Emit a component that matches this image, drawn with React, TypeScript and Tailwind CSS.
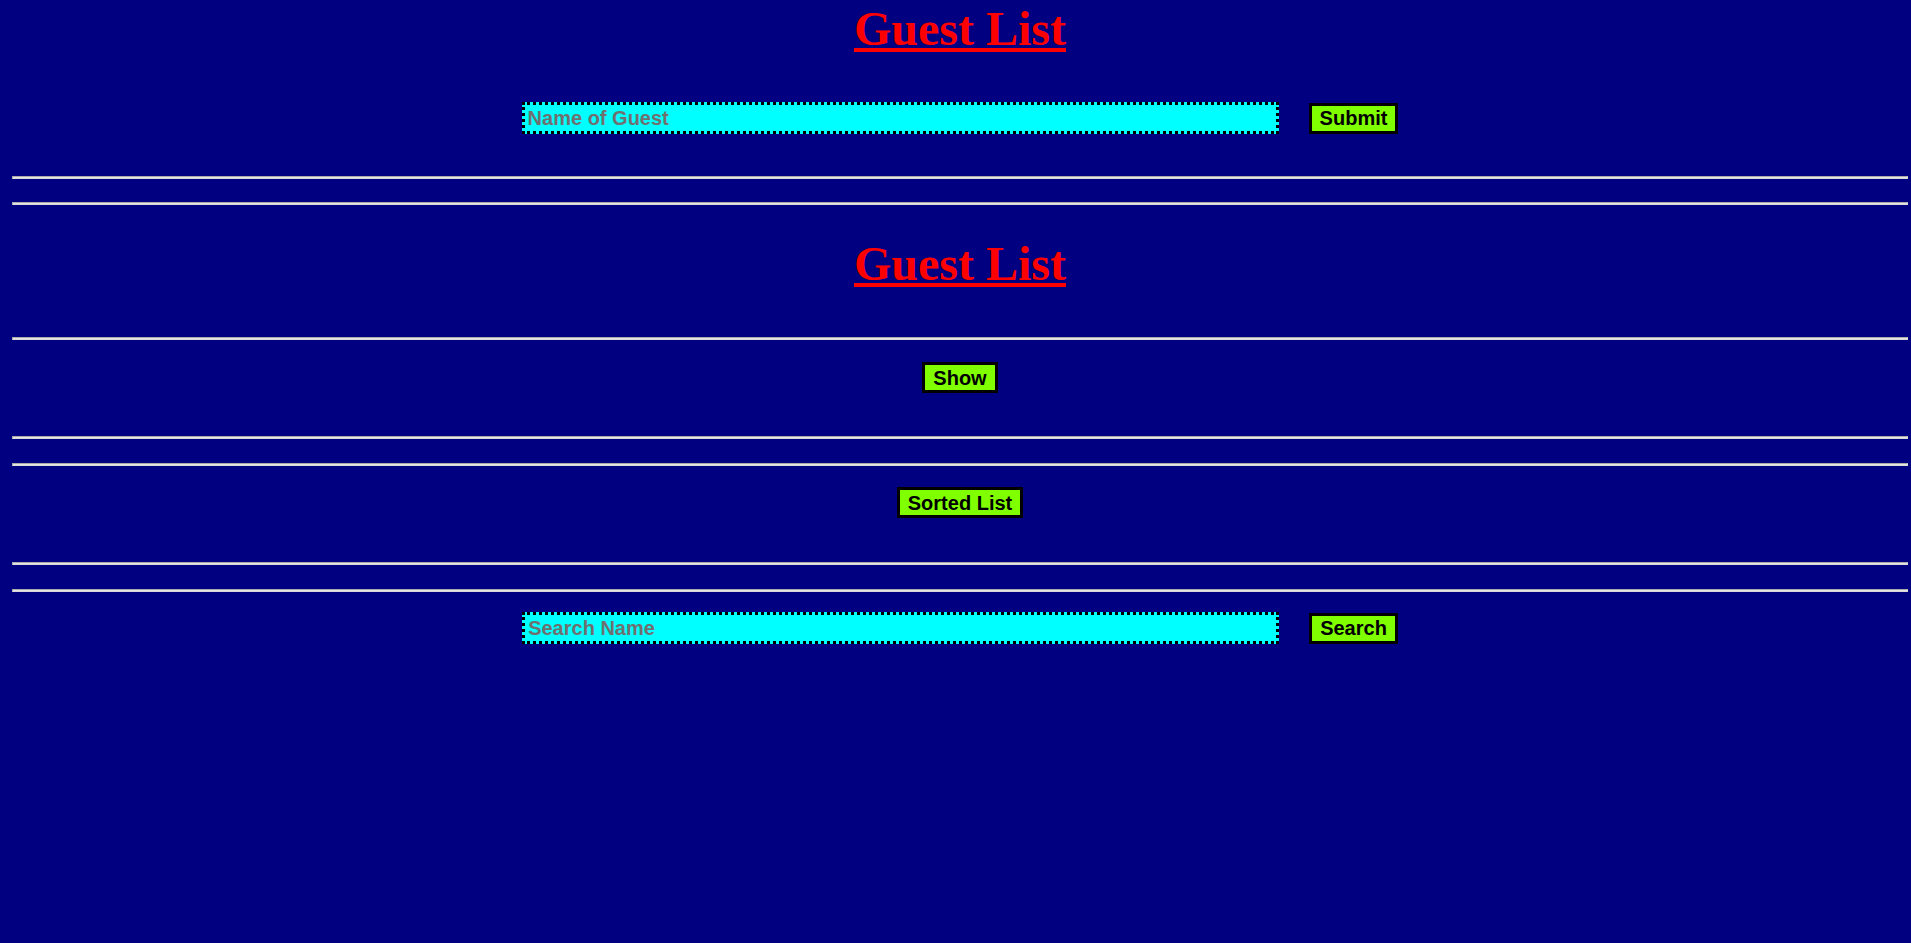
import React, { useState } from 'react';

const Rule = ({ className = '' }: { className?: string }) => (
  <div className={`h-[3px] border border-t-[#a8a8a8] border-l-[#a8a8a8] border-b-[#d8d8d8] border-r-[#d8d8d8] bg-[#e4e4e4] ${className}`} />
);

const GreenButton = ({ label, onClick }: { label: string; onClick?: () => void }) => (
  <button
    onClick={onClick}
    className="h-[31px] px-[8px] border-[3px] border-black bg-[#80ff00] text-black text-[20px] font-bold leading-none cursor-pointer"
  >
    {label}
  </button>
);

const Title = ({ className = '' }: { className?: string }) => (
  <h1
    className={`text-center text-[48px] leading-[53px] font-bold text-[#ff0000] underline decoration-[4px] underline-offset-[3px] ${className}`}
    style={{ fontFamily: '"Liberation Serif", "Times New Roman", serif' }}
  >
    Guest List
  </h1>
);

export default function App() {
  const [guest, setGuest] = useState('');
  const [search, setSearch] = useState('');

  return (
    <div
      className="min-h-screen bg-[#000080] pl-[12px] pr-[3px] pb-10"
      style={{ fontFamily: '"Liberation Sans", Arial, sans-serif' }}
    >
      {/* Entry form */}
      <Title className="pt-[2px]" />
      <div className="mt-[47px] flex justify-center items-center gap-[30px]">
        <input
          value={guest}
          onChange={e => setGuest(e.target.value)}
          placeholder="Name of Guest"
          className="w-[757px] h-[32px] px-[3px] border-[3px] border-dotted border-black bg-[#00ffff] text-[20px] font-bold text-black placeholder:text-[#707070] outline-none"
        />
        <GreenButton label="Submit" />
      </div>

      <Rule className="mt-[42px]" />
      <Rule className="mt-[23px]" />

      {/* List */}
      <Title className="mt-[32px]" />
      <Rule className="mt-[47px]" />
      <div className="mt-[22px] flex justify-center">
        <GreenButton label="Show" />
      </div>
      <Rule className="mt-[43px]" />
      <Rule className="mt-[24px]" />

      {/* Sorted */}
      <div className="mt-[21px] flex justify-center">
        <GreenButton label="Sorted List" />
      </div>
      <Rule className="mt-[44px]" />
      <Rule className="mt-[24px]" />

      {/* Search */}
      <div className="mt-[20px] flex justify-center items-center gap-[30px]">
        <input
          value={search}
          onChange={e => setSearch(e.target.value)}
          placeholder="Search Name"
          className="w-[757px] h-[32px] px-[3px] border-[3px] border-dotted border-black bg-[#00ffff] text-[20px] font-bold text-black placeholder:text-[#707070] outline-none"
        />
        <GreenButton label="Search" />
      </div>
    </div>
  );
}
